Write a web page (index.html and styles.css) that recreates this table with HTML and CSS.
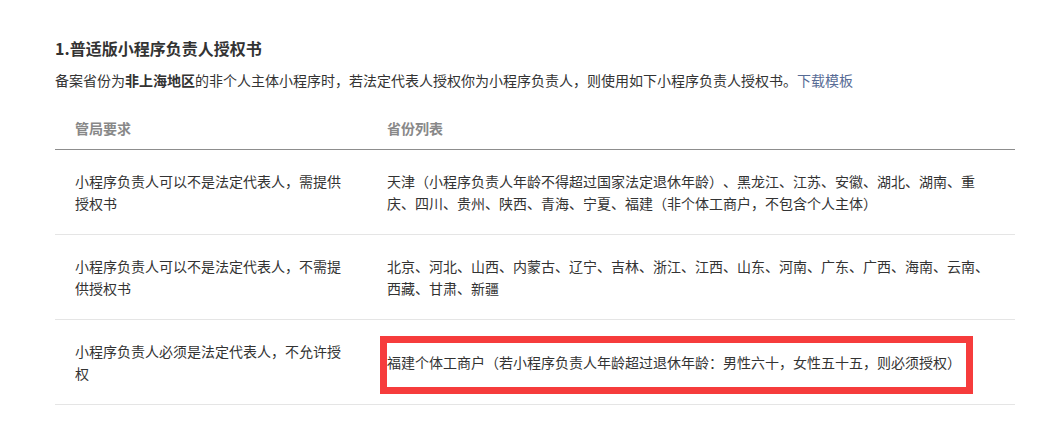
FILE: index.html
```html
<!DOCTYPE html>
<html lang="zh-CN">
<head>
    <meta charset="UTF-8">
    <title>小程序负责人授权书</title>
    <link rel="stylesheet" href="styles.css">
</head>
<body>

<div class="doc">
    <h3 class="docTitle">1.普适版小程序负责人授权书</h3>
    <p class="docDesc">备案省份为<strong>非上海地区</strong>的非个人主体小程序时，若法定代表人授权你为小程序负责人，则使用如下小程序负责人授权书。<a href="javascript:;">下载模板</a></p>

    <table class="ruleTable">
        <thead>
        <tr>
            <th class="colReq">管局要求</th>
            <th>省份列表</th>
        </tr>
        </thead>
        <tbody>
        <tr>
            <td class="colReq">小程序负责人可以不是法定代表人，需提供授权书</td>
            <td>天津（小程序负责人年龄不得超过国家法定退休年龄）、黑龙江、江苏、安徽、湖北、湖南、重庆、四川、贵州、陕西、青海、宁夏、福建（非个体工商户，不包含个人主体）</td>
        </tr>
        <tr>
            <td class="colReq">小程序负责人可以不是法定代表人，不需提供授权书</td>
            <td>北京、河北、山西、内蒙古、辽宁、吉林、浙江、江西、山东、河南、广东、广西、海南、云南、西藏、甘肃、新疆</td>
        </tr>
        <tr>
            <td class="colReq">小程序负责人必须是法定代表人，不允许授权</td>
            <td><span class="mark">福建个体工商户（若小程序负责人年龄超过退休年龄：男性六十，女性五十五，则必须授权）</span></td>
        </tr>
        </tbody>
    </table>
</div>

</body>
</html>
```

FILE: styles.css
```css
*{
    margin:0;
    padding:0;
}
body{
    font-family: "Noto Sans CJK SC", "Liberation Sans", sans-serif;
    color: #333;
    background: #fff;
    text-spacing-trim: space-all;
}
.doc{
    width: 960px;
    padding: 36px 0 0 55px;
}
.docTitle{
    font-size: 16px;
    line-height: 24px;
    font-weight: bold;
    color: #333;
}
.docDesc{
    margin-top: 9px;
    font-size: 14px;
    line-height: 22px;
}
.docDesc strong{
    font-weight: bold;
}
.docDesc a{
    color: #576b95;
    text-decoration: none;
}
.ruleTable{
    width: 100%;
    margin-top: 14px;
    border-collapse: collapse;
    font-size: 14px;
    line-height: 22px;
}
.ruleTable th{
    text-align: left;
    font-weight: bold;
    color: #888;
    padding: 12px 20px 10px;
    border-bottom: 1px solid #8d8d8d;
}
.ruleTable td{
    padding: 20px 20px 20px;
    border-bottom: 1px solid #e5e5e5;
    vertical-align: middle;
}
.ruleTable .colReq{
    width: 272px;
}
.mark{
    position: relative;
}
.mark:before{
    content: '';
    position: absolute;
    left: -7px;
    top: -16px;
    width: 593px;
    height: 58px;
    box-sizing: border-box;
    border: 7px solid #f63c3c;
}
```
